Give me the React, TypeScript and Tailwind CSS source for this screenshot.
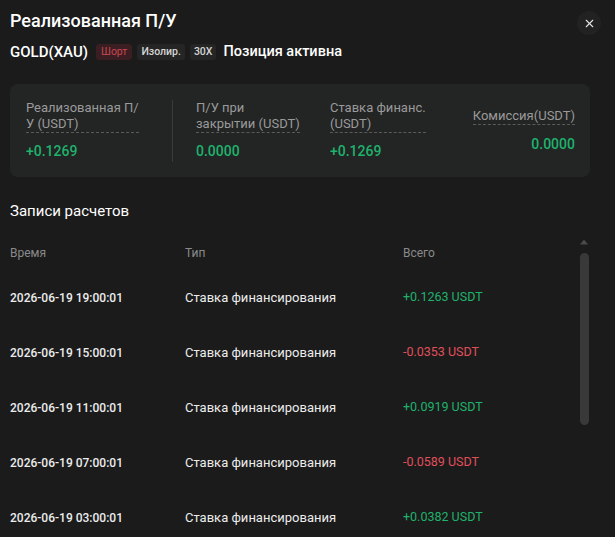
import { X } from "lucide-react";

const rows = [
  { time: "2026-06-19 19:00:01", type: "Ставка финансирования", amount: "+0.1263 USDT", up: true },
  { time: "2026-06-19 15:00:01", type: "Ставка финансирования", amount: "-0.0353 USDT", up: false },
  { time: "2026-06-19 11:00:01", type: "Ставка финансирования", amount: "+0.0919 USDT", up: true },
  { time: "2026-06-19 07:00:01", type: "Ставка финансирования", amount: "-0.0589 USDT", up: false },
  { time: "2026-06-19 03:00:01", type: "Ставка финансирования", amount: "+0.0382 USDT", up: true },
];

function Label({ children }: { children: React.ReactNode }) {
  return (
    <div className="w-fit border-b border-dashed border-[#5a5a5a] text-[13px] leading-[16px] text-[#9a9a9a]">
      {children}
    </div>
  );
}

export default function App() {
  return (
    <div
      className="w-[615px] h-[537px] overflow-hidden bg-[#1b1b1b] text-white"
      style={{ fontFamily: "Roboto, 'Noto Sans', sans-serif" }}
    >
      {/* Header */}
      <div className="pl-[10px] pr-[14px] pt-[7px]">
        <div className="flex h-[28px] items-center justify-between">
          <h1 className="text-[18px] font-medium leading-[28px]">Реализованная П/У</h1>
          <button className="mt-[4px] flex h-[24px] w-[24px] items-center justify-center rounded-full bg-[#222222]">
            <X size={13} strokeWidth={2} className="text-[#e5e5e5]" />
          </button>
        </div>
        <div className="mt-[7px] flex h-[20px] items-center">
          <span className="text-[15px] font-medium">GOLD(XAU)</span>
          <span className="ml-[8px] rounded-[3px] bg-[#3a1e22] px-[5px] text-[10.5px] leading-[16px] text-[#c94853]">
            Шорт
          </span>
          <span className="ml-[5px] rounded-[3px] bg-[#252525] px-[4px] text-[10.5px] font-medium leading-[16px] text-[#d6d6d6]">
            Изолир.
          </span>
          <span className="ml-[5px] rounded-[3px] bg-[#252525] px-[4px] text-[10.5px] font-medium leading-[16px] text-[#d6d6d6]">
            30X
          </span>
          <span className="ml-[7px] text-[14.5px] font-medium">Позиция активна</span>
        </div>
      </div>

      {/* Summary card */}
      <div className="ml-[10px] mt-[22px] flex h-[93px] w-[580px] items-center rounded-[8px] bg-[#232424] pl-[16px] pr-[15px]">
        <div className="w-[146px]">
          <Label>
            Реализованная П/
            <br />У (USDT)
          </Label>
          <div className="mt-[8px] text-[14px] font-medium leading-[20px] text-[#1fb26d]">+0.1269</div>
        </div>
        <div className="h-[62px] w-px bg-[#3a3a3a]" />
        <div className="ml-[23px] w-[134px]">
          <Label>
            П/У при
            <br />
            закрытии (USDT)
          </Label>
          <div className="mt-[8px] text-[14px] font-medium leading-[20px] text-[#1fb26d]">0.0000</div>
        </div>
        <div className="w-[120px]">
          <Label>
            Ставка финанс.
            <br />
            (USDT)
          </Label>
          <div className="mt-[8px] text-[14px] font-medium leading-[20px] text-[#1fb26d]">+0.1269</div>
        </div>
        <div className="flex flex-1 flex-col items-end">
          <Label>Комиссия(USDT)</Label>
          <div className="mt-[9px] text-[14px] font-medium leading-[20px] text-[#1fb26d]">0.0000</div>
        </div>
      </div>

      {/* Records */}
      <div className="mt-[24px] px-[10px] text-[15px] leading-[20px]">Записи расчетов</div>

      <div className="mt-[22px] flex pl-[10px] pr-[26px]">
        <div className="flex-1">
          <div className="grid h-[20px] grid-cols-[175px_218px_1fr] items-center text-[12px] text-[#8a8a8a]">
            <span>Время</span>
            <span>Тип</span>
            <span>Всего</span>
          </div>
          <div className="pt-[7px]">
            {rows.map((r) => (
              <div key={r.time} className="grid h-[55px] grid-cols-[175px_218px_1fr] items-center">
                <span className="text-[12px] font-medium text-[#ececec]">{r.time}</span>
                <span className="text-[13px] text-[#ececec]">{r.type}</span>
                <span className={r.up ? "text-[12.5px] text-[#1fb26d]" : "text-[12.5px] text-[#e0505b]"}>
                  {r.amount}
                </span>
              </div>
            ))}
          </div>
        </div>
        {/* Scrollbar */}
        <div className="-mt-[4px] flex w-[10px] flex-col items-center">
          <svg width="10" height="6" viewBox="0 0 10 6" className="block">
            <path d="M5 0.5 L9 5.5 L1 5.5 Z" fill="#4a4a4a" />
          </svg>
          <div className="mt-[8px] h-[172px] w-[9px] rounded-full bg-[#393939]" />
        </div>
      </div>
    </div>
  );
}
